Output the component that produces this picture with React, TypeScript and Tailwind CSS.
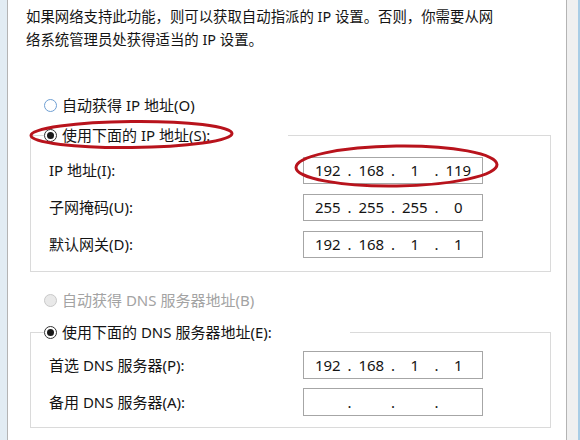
import React from 'react';

type RadioState = 'off' | 'on' | 'disabled';

const Radio = ({ state }: { state: RadioState }) => {
  if (state === 'on') {
    return (
      <span className="w-[13px] h-[13px] rounded-full border border-[#333333] bg-white flex items-center justify-center shrink-0">
        <span className="w-[7px] h-[7px] rounded-full bg-[#1a1a1a]" />
      </span>
    );
  }
  if (state === 'disabled') {
    return <span className="w-[13px] h-[13px] rounded-full border border-[#c9c9c9] bg-[#e9e9e9] shrink-0" />;
  }
  return <span className="w-[13px] h-[13px] rounded-full border border-[#6f9fd3] bg-white shrink-0" />;
};

const IpField = ({ parts }: { parts: string[] }) => (
  <div className="w-[180px] h-full border border-[#a6a6a6] bg-white flex items-center px-[4px] text-[15px]">
    {parts.map((p, i) => (
      <React.Fragment key={i}>
        <span className="flex-1 text-center">{p}</span>
        {i < 3 && <span className="w-[4px] text-center">.</span>}
      </React.Fragment>
    ))}
  </div>
);

const Row = ({ label, parts, h }: { label: string; parts: string[]; h: string }) => (
  <div className={`flex items-center ${h}`}>
    <span className="w-[254px]">{label}</span>
    <IpField parts={parts} />
  </div>
);

export default function App() {
  return (
    <div className="relative w-[580px] h-[440px] overflow-hidden flex bg-[#eef4f8] font-['Noto_Sans','Noto_Sans_CJK_SC',sans-serif] text-[#141414]">
      <div className="w-[7px] bg-[#e2ecf3]" />
      <div className="flex-1 bg-white border-l border-r border-[#b4b4b4] flex flex-col">
        <p className="ml-[18px] mt-[5px] text-[14.4px] leading-[23px]">
          如果网络支持此功能，则可以获取自动指派的 IP 设置。否则，你需要从网
          <br />
          络系统管理员处获得适当的 IP 设置。
        </p>

        <div className="ml-[36px] mt-[43px] h-[22px] flex items-center gap-[5px] text-[15px]">
          <Radio state="off" />
          <span>自动获得 IP 地址(O)</span>
        </div>

        <fieldset className="ml-[22px] mr-[15px] mt-[8px] border border-[#dadada] pt-[11px] pb-[13px] text-[15px]">
          <legend className="ml-[13px] w-[244px] h-[22px] flex items-center gap-[5px] bg-white">
            <Radio state="on" />
            <span>使用下面的 IP 地址(S):</span>
          </legend>
          <div className="pl-[18px] flex flex-col gap-[10px]">
            <Row label="IP 地址(I):" parts={['192', '168', '1', '119']} h="h-[27px]" />
            <Row label="子网掩码(U):" parts={['255', '255', '255', '0']} h="h-[27px]" />
            <Row label="默认网关(D):" parts={['192', '168', '1', '1']} h="h-[27px]" />
          </div>
        </fieldset>

        <div className="ml-[36px] mt-[17px] h-[22px] flex items-center gap-[5px] text-[15px] text-[#a3a3a3]">
          <Radio state="disabled" />
          <span>自动获得 DNS 服务器地址(B)</span>
        </div>

        <fieldset className="ml-[22px] mr-[15px] mt-[10px] border border-[#dadada] pt-[8px] pb-[11px] text-[15px]">
          <legend className="ml-[13px] w-[306px] h-[22px] flex items-center gap-[5px] bg-white">
            <Radio state="on" />
            <span>使用下面的 DNS 服务器地址(E):</span>
          </legend>
          <div className="pl-[18px] flex flex-col gap-[9px]">
            <Row label="首选 DNS 服务器(P):" parts={['192', '168', '1', '1']} h="h-[28px]" />
            <Row label="备用 DNS 服务器(A):" parts={['', '', '', '']} h="h-[28px]" />
          </div>
        </fieldset>
      </div>
      <div className="w-[11px] bg-[#f0f0f0]" />
      <div className="w-[2px] bg-[#a9cde6]" />

      <svg className="absolute inset-0 pointer-events-none" width="580" height="440" viewBox="0 0 580 440">
        <ellipse cx="131.5" cy="134.5" rx="100.5" ry="13" fill="none" stroke="#b8131c" strokeWidth="3" transform="rotate(-0.6 131.5 134.5)" />
        <ellipse cx="396.5" cy="166" rx="100.5" ry="20" fill="none" stroke="#b8131c" strokeWidth="3" transform="rotate(-0.8 396.5 166)" />
      </svg>
    </div>
  );
}
